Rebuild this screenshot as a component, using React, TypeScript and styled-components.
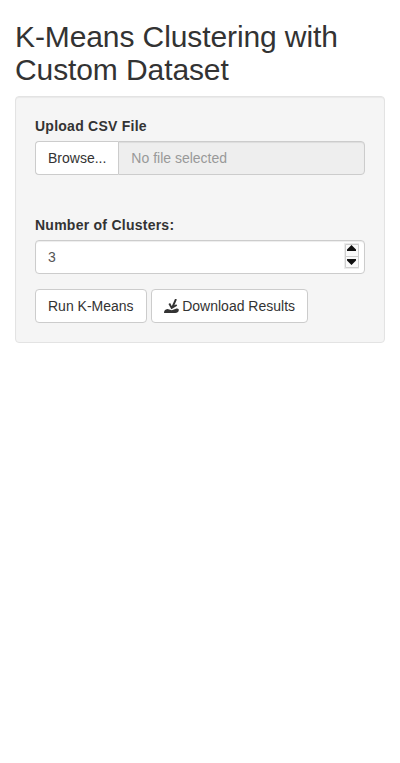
import React from "react";
import styled, { createGlobalStyle } from "styled-components";

const GlobalStyle = createGlobalStyle`
  * { box-sizing: border-box; }
  body {
    margin: 0;
    background: #fff;
    color: #333;
    font: 14px/20px "Liberation Sans", Arial, sans-serif;
  }
`;

const Container = styled.main`
  padding: 0 15px;
`;

const Title = styled.h2`
  margin: 20px 0 10px;
  font-size: 30px;
  font-weight: 500;
  line-height: 33px;
  letter-spacing: -0.1px;
`;

const Well = styled.form`
  min-height: 20px;
  padding: 19px;
  background: #f5f5f5;
  border: 1px solid #e3e3e3;
  border-radius: 4px;
  box-shadow: inset 0 1px 1px rgba(0, 0, 0, 0.05);
`;

const Field = styled.div<{ $gap: number }>`
  display: flex;
  flex-direction: column;
  margin-bottom: ${(p) => p.$gap}px;
`;

const Label = styled.label`
  margin-bottom: 5px;
  font-weight: 700;
  letter-spacing: 0.25px;
`;

const InputGroup = styled.div`
  display: flex;
`;

const Button = styled.button`
  display: inline-flex;
  align-items: center;
  height: 34px;
  padding: 6px 12px;
  font: inherit;
  color: #333;
  white-space: nowrap;
  background: #fff;
  border: 1px solid #ccc;
  border-radius: 4px;
`;

const BrowseButton = styled(Button)`
  border-right: 0;
  border-radius: 4px 0 0 4px;
`;

const FileName = styled.div`
  flex: 1;
  height: 34px;
  padding: 6px 12px;
  color: #999;
  background: #eee;
  border: 1px solid #ccc;
  border-radius: 0 4px 4px 0;
  box-shadow: inset 0 1px 1px rgba(0, 0, 0, 0.075);
`;

const NumberBox = styled.div`
  display: flex;
  align-items: flex-start;
  justify-content: space-between;
  height: 34px;
  padding: 2px 5px 0 12px;
  line-height: 28px;
  color: #555;
  background: #fff;
  border: 1px solid #ccc;
  border-radius: 4px;
  box-shadow: inset 0 1px 1px rgba(0, 0, 0, 0.075);
`;

const Spinner = styled.svg`
  display: block;
  width: 15px;
  height: 26px;
`;

const Actions = styled.div`
  display: flex;
  gap: 4px;
`;

const DownloadIcon = styled.svg`
  width: 15px;
  height: 15px;
  margin-right: 3.6px;
`;

export default function App() {
  return (
    <>
      <GlobalStyle />
      <Container>
        <Title>K-Means Clustering with Custom Dataset</Title>
        <Well>
          <Field $gap={40}>
            <Label>Upload CSV File</Label>
            <InputGroup>
              <BrowseButton type="button">Browse...</BrowseButton>
              <FileName>No file selected</FileName>
            </InputGroup>
          </Field>
          <Field $gap={15}>
            <Label>Number of Clusters:</Label>
            <NumberBox>
              <span>3</span>
              <Spinner viewBox="0 0 15 26">
                <path d="M0 0h15v26H0z" fill="#ececec" />
                <path d="M1.500 1.500h13v12h-13z M1.500 13.500h13v11h-13z" fill="#fafafa" stroke="#cfcfcf" />
                <path d="M7.500 2 12 6.500V8H3V6.500z M3 16h9v1.500L7.500 22 3 17.500z" fill="#111" />
              </Spinner>
            </NumberBox>
          </Field>
          <Actions>
            <Button type="button">Run K-Means</Button>
            <Button type="button">
              <DownloadIcon viewBox="0 0 15 15" fill="none" stroke="#333">
                <path d="M12 0 8.300 8.500M5.300 4.500 7.700 9 12.700 6" strokeWidth="1.900" />
                <path d="M0 14c0-2 1-3.500 3.500-3.900l4.300 1.200 4.700-1.800c1.500-.3 2.500.5 2.300 1.700-.3 1.700-1.500 2.800-3.500 2.800z" fill="#333" stroke="none" />
              </DownloadIcon>
              Download Results
            </Button>
          </Actions>
        </Well>
      </Container>
    </>
  );
}
